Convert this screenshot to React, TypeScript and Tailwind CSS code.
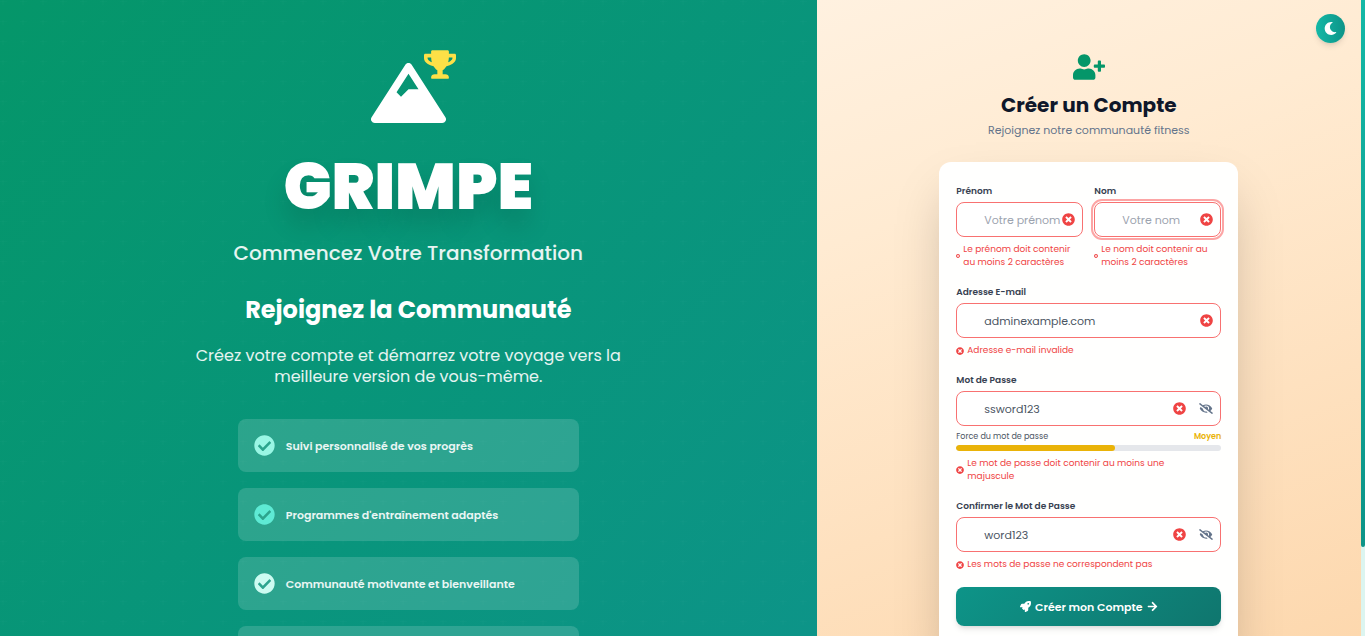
import { useState, type ReactNode } from "react";
import {
  FaArrowRight,
  FaCheckCircle,
  FaEyeSlash,
  FaMoon,
  FaMountain,
  FaRocket,
  FaTimesCircle,
  FaTrophy,
  FaUserPlus,
} from "react-icons/fa";

const benefits = [
  { text: "Suivi personnalisé de vos progrès", tone: "text-[#99f6e4]" },
  { text: "Programmes d'entraînement adaptés", tone: "text-[#5eead4]" },
  { text: "Communauté motivante et bienveillante", tone: "text-[#ccfbf1]" },
];

const strength = 60;

type FieldProps = {
  id: string;
  label: string;
  value?: string;
  placeholder?: string;
  error: string;
  narrow?: boolean;
  focused?: boolean;
  secret?: boolean;
  children?: ReactNode;
};

function Field({ id, label, value = "", placeholder, error, narrow, focused, secret, children }: FieldProps) {
  const [text, setText] = useState(value);
  return (
    <div className="flex min-w-0 flex-col">
      <label htmlFor={id} className="text-[9px] leading-[14px] font-semibold text-[#374151]">
        {label}
      </label>
      <div
        className={
          focused
            ? "mt-1 flex h-[35px] items-center rounded-lg border border-[#f87171] bg-white pr-[7px] pl-[27px] outline-2 outline-offset-1 outline-[#fca5a5]"
            : "mt-1 flex h-[35px] items-center rounded-lg border border-[#f87171] bg-white pr-[7px] pl-[27px]"
        }
      >
        <input
          id={id}
          type="text"
          value={text}
          placeholder={placeholder}
          onChange={(e) => setText(e.target.value)}
          className="w-full min-w-0 flex-1 bg-transparent text-[11px] leading-4 text-[#4b5563] outline-none placeholder:text-[#9ca3af]"
        />
        <FaTimesCircle className="size-[13px] shrink-0 text-[#ef4444]" />
        {secret && (
          <button type="button" aria-label="Afficher" className="ml-[13px] text-[#64748b]">
            <FaEyeSlash className="h-[11px] w-[14px]" />
          </button>
        )}
      </div>
      {children}
      <p
        className={
          narrow
            ? "mt-[6px] flex items-center gap-[3px] text-[9px] leading-[13px] text-[#ef4444]"
            : "mt-[6px] flex items-center gap-[3px] pr-4 text-[9px] leading-[13px] text-[#ef4444]"
        }
      >
        <FaTimesCircle className={narrow ? "size-1 shrink-0" : "size-2 shrink-0"} />
        <span>{error}</span>
      </p>
    </div>
  );
}

export default function App() {
  return (
    <div className="flex h-screen overflow-hidden font-['Poppins','Inter',sans-serif]">
      <div className="flex min-w-0 flex-1">
        <section className="relative w-3/5 overflow-hidden bg-linear-135 from-[#059669] to-[#0d9488] text-white">
          <svg aria-hidden="true" className="absolute inset-0 size-full">
            <pattern id="plus" width="20" height="20" patternUnits="userSpaceOnUse">
              <path d="M3 0v5M0 1.500h7" stroke="#fff" strokeOpacity="0.012" />
            </pattern>
            <rect width="100%" height="100%" fill="url(#plus)" />
          </svg>
          <div className="relative flex flex-col items-center pt-[50px]">
            <div className="relative flex h-[73px] w-[75px] items-end">
              <FaMountain className="h-[60px] w-[75px]" />
              <FaTrophy className="absolute top-0 -right-[10px] h-[29px] w-8 text-[#fde047]" />
            </div>
            <h1 className="mt-8 text-[64px] leading-[64px] font-black text-shadow-[0_16px_24px_rgb(0_0_0/0.13)]">
              GRIMPE
            </h1>
            <p className="mt-[19px] text-[20px] leading-[30px] font-medium text-white/90">
              Commencez Votre Transformation
            </p>
            <h2 className="mt-[26px] text-[24px] leading-8 font-bold">Rejoignez la Communauté</h2>
            <p className="mt-[19px] w-[440px] text-center text-[16px] leading-[21px] text-white/90">
              Créez votre compte et démarrez votre voyage vers la meilleure version de vous-même.
            </p>
            <ul className="mt-8 flex w-[341px] flex-col gap-4">
              {benefits.map((b) => (
                <li key={b.text} className="flex h-[53px] items-center gap-[11px] rounded-lg bg-white/15 px-4">
                  <FaCheckCircle className={`size-[21px] ${b.tone}`} />
                  <span className="text-[11px] leading-4 font-semibold text-white/90">{b.text}</span>
                </li>
              ))}
              <li className="h-[53px] rounded-lg bg-white/15" />
            </ul>
          </div>
        </section>

        <main className="relative flex-1 overflow-hidden bg-linear-160 from-[#fff1e0] via-[#ffebd2] via-30% to-[#fdd8ae]">
          <button
            type="button"
            aria-label="Mode sombre"
            className="absolute top-[14px] right-4 flex size-[29px] items-center justify-center rounded-full bg-linear-to-r from-[#14b8a6] to-[#0d9488] text-white shadow-md"
          >
            <FaMoon className="size-[13px]" />
          </button>
          <div className="flex flex-col items-center pt-[54px]">
            <FaUserPlus className="h-[26px] w-8 text-[#059669]" />
            <h2 className="mt-3 text-[20px] leading-[27px] font-bold text-[#0f172a]">Créer un Compte</h2>
            <p className="mt-[3px] text-[11px] leading-4 text-[#64748b]">
              Rejoignez notre communauté fitness
            </p>

            <form className="mt-6 flex w-[299px] flex-col rounded-xl border border-white/20 bg-white/98 px-4 pt-[21px] pb-8 shadow-2xl">
              <div className="grid grid-cols-2 gap-[11px]">
                <Field id="prenom" label="Prénom" placeholder="Votre prénom" error="Le prénom doit contenir au moins 2 caractères" narrow />
                <Field id="nom" label="Nom" placeholder="Votre nom" error="Le nom doit contenir au moins 2 caractères" narrow focused />
              </div>
              <div className="mt-4 flex flex-col gap-4">
                <Field id="email" label="Adresse E-mail" value="adminexample.com" error="Adresse e-mail invalide" />
                <Field id="passe" label="Mot de Passe" value="ssword123" error="Le mot de passe doit contenir au moins une majuscule" secret>
                  <div className="mt-[5px] flex justify-between text-[8px] leading-[11px] text-[#4b5563]">
                    <span>Force du mot de passe</span>
                    <span className="font-semibold text-[#eab308]">Moyen</span>
                  </div>
                  <div className="mt-[3px] h-[6px] overflow-hidden rounded-full bg-[#e5e7eb]">
                    <div className="h-full rounded-full bg-[#eab308]" style={{ width: `${strength}%` }} />
                  </div>
                </Field>
                <Field id="confirmer" label="Confirmer le Mot de Passe" value="word123" error="Les mots de passe ne correspondent pas" secret />
                <button
                  type="submit"
                  className="flex h-[39px] items-center justify-center gap-1 rounded-lg bg-linear-135 from-[#0d9488] to-[#0f766e] text-[11px] leading-4 font-semibold text-white shadow-md"
                >
                  <FaRocket className="size-[11px]" />
                  Créer mon Compte
                  <FaArrowRight className="size-[11px]" />
                </button>
              </div>
            </form>
          </div>
        </main>
      </div>

      <div className="w-1 bg-[#dcf5f0]">
        <div className="h-[86%] rounded-b-sm bg-linear-to-b from-[#14b8a6] to-[#0d9488]" />
      </div>
    </div>
  );
}
